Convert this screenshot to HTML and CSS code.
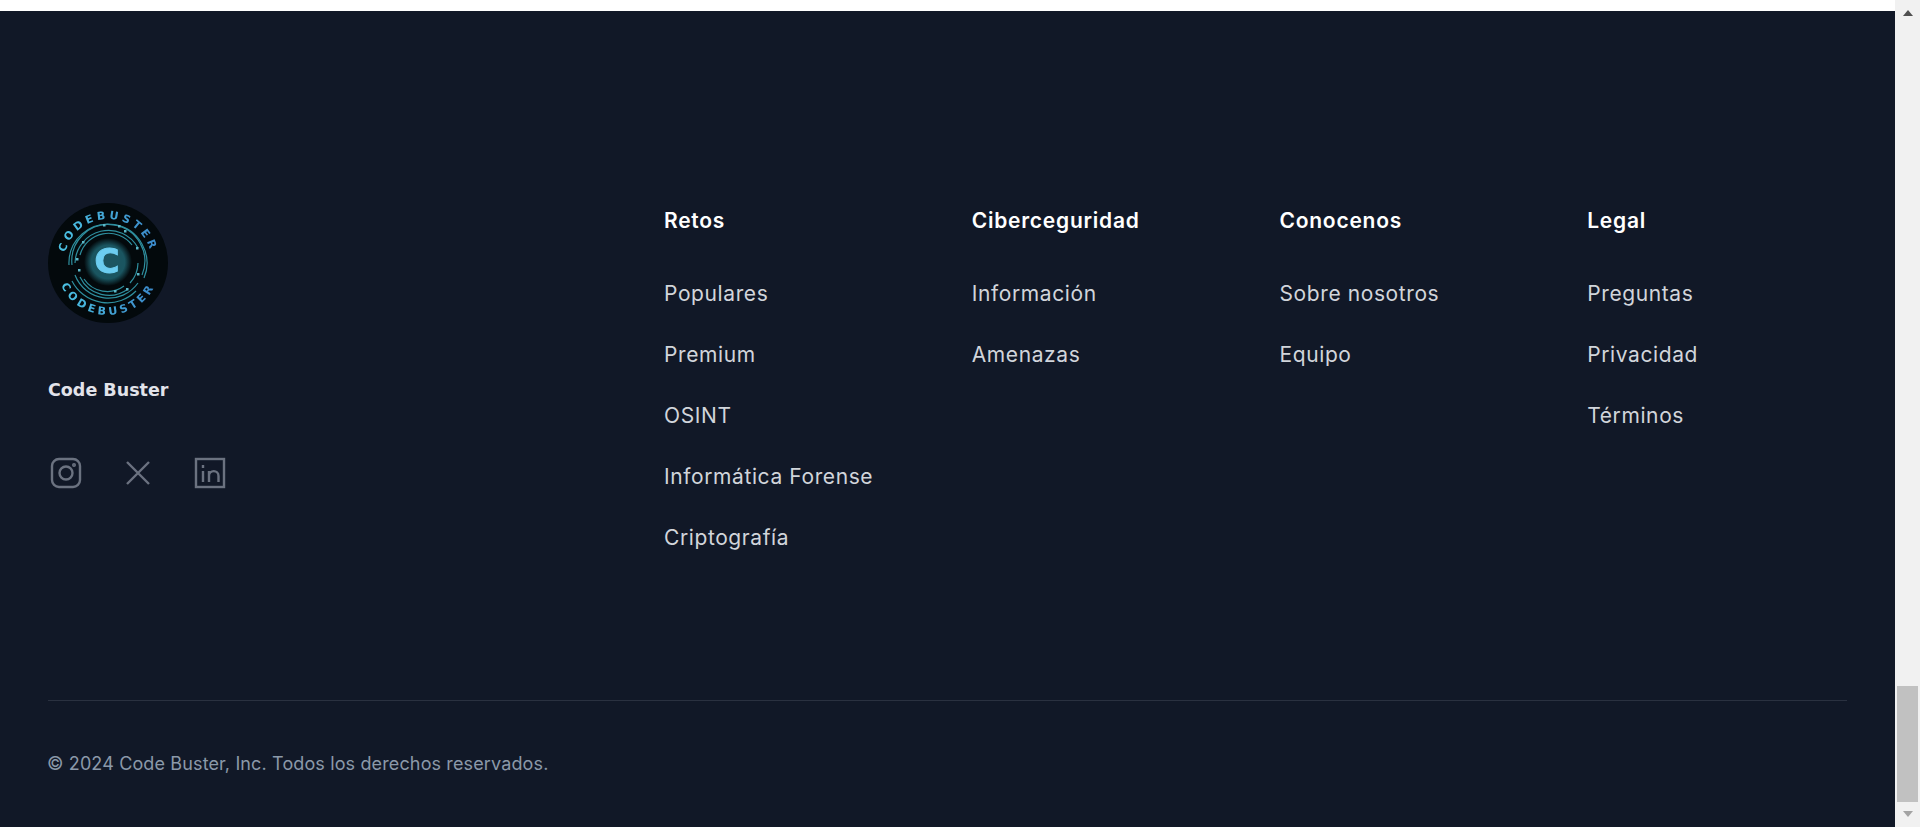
FILE: index.html
```html
<!DOCTYPE html>
<html lang="es">
<head>
<meta charset="utf-8">
<title>Code Buster</title>
<link rel="stylesheet" href="styles.css">
</head>
<body>
<div class="page">
  <main class="main">
    <div class="topstrip"></div>
    <footer class="footer">
      <div class="grid">
        <div class="brand">
          <svg class="logo" viewBox="0 0 120 120" aria-label="CodeBuster logo">
            <defs>
              <path id="arcTop" d="M16 60 A44 44 0 1 1 104 60"/>
              <path id="arcBot" d="M8 60 A52 52 0 0 0 112 60"/>
              <linearGradient id="lg" x1="0" y1="0" x2="1" y2="0">
                <stop offset="0" stop-color="#4cc4e4"/>
                <stop offset="1" stop-color="#3a86c8"/>
              </linearGradient>
              <radialGradient id="glow">
                <stop offset="0" stop-color="#1d5560"/>
                <stop offset="0.7" stop-color="#1a5560"/>
                <stop offset="1" stop-color="#03090c"/>
              </radialGradient>
            </defs>
            <circle cx="60" cy="60" r="60" fill="#03090c"/>
            <text class="logo-ring-text" fill="url(#lg)"><textPath href="#arcTop" startOffset="50%" text-anchor="middle">CODEBUSTER</textPath></text>
            <text class="logo-ring-text" fill="url(#lg)"><textPath href="#arcBot" startOffset="50%" text-anchor="middle">CODEBUSTER</textPath></text>
            <g class="logo-rings">
              <path d="M21 62 A39 39 0 1 1 96 75"/>
              <path d="M24 62 A36.500 36.500 0 1 1 94 72"/>
              <path d="M27 60 A33.500 33.500 0 0 1 90 45"/>
              <path d="M32 52 A29.500 29.500 0 0 1 84 42"/>
              <path d="M90 60 A30 30 0 0 1 82 80"/>
              <path d="M27 72 A36 36 0 0 0 90 80"/>
              <path d="M24 78 A40 40 0 0 0 88 88"/>
              <path d="M32 74 A32 32 0 0 0 80 86"/>
              <path d="M36 76 A28 28 0 0 0 76 83"/>
            </g>
            <g class="logo-dots">
              <rect x="55" y="21" width="2.500" height="2.500"/><rect x="70" y="22" width="2.500" height="2.500"/>
              <rect x="76" y="27" width="2.500" height="2.500"/><rect x="34" y="38" width="2.500" height="2.500"/>
              <rect x="28" y="55" width="2.500" height="2.500"/><rect x="30" y="66" width="2.500" height="2.500"/>
              <rect x="88" y="44" width="2.500" height="2.500"/><rect x="89" y="70" width="2.500" height="2.500"/>
              <rect x="78" y="85" width="2.500" height="2.500"/><rect x="66" y="87" width="2.500" height="2.500"/>
            </g>
            <circle cx="60" cy="59" r="24" fill="url(#glow)"/>
            <text class="logo-c" x="59" y="70" text-anchor="middle">C</text>
          </svg>
          <p class="name">Code Buster</p>
          <div class="social">
            <a class="social-link" href="#" aria-label="Instagram">
              <svg class="icon" viewBox="0 0 36 36"><rect x="4" y="4" width="28" height="28" rx="7"/><circle cx="18" cy="18" r="6.500"/><circle cx="26" cy="10" r="0.800"/></svg>
            </a>
            <a class="social-link" href="#" aria-label="X">
              <svg class="icon" viewBox="0 0 36 36"><path d="M7 7 L29 29 M29 7 L7 29"/></svg>
            </a>
            <a class="social-link" href="#" aria-label="LinkedIn">
              <svg class="icon" viewBox="0 0 36 36"><rect x="4" y="4" width="28" height="28"/><path d="M11 16 V27 M11 10 V13 M17 27 V16 M17 21 C17 14.500 26.500 14.500 26.500 21 V27"/></svg>
            </a>
          </div>
        </div>
        <nav class="col">
          <h3 class="col-title">Retos</h3>
          <ul class="links">
            <li><a href="#">Populares</a></li>
            <li><a href="#">Premium</a></li>
            <li><a href="#">OSINT</a></li>
            <li><a href="#">Informática Forense</a></li>
            <li><a href="#">Criptografía</a></li>
          </ul>
        </nav>
        <nav class="col">
          <h3 class="col-title">Ciberceguridad</h3>
          <ul class="links">
            <li><a href="#">Información</a></li>
            <li><a href="#">Amenazas</a></li>
          </ul>
        </nav>
        <nav class="col">
          <h3 class="col-title">Conocenos</h3>
          <ul class="links">
            <li><a href="#">Sobre nosotros</a></li>
            <li><a href="#">Equipo</a></li>
          </ul>
        </nav>
        <nav class="col">
          <h3 class="col-title">Legal</h3>
          <ul class="links">
            <li><a href="#">Preguntas</a></li>
            <li><a href="#">Privacidad</a></li>
            <li><a href="#">Términos</a></li>
          </ul>
        </nav>
      </div>
      <div class="bottom">
        <p class="copy">© 2024 Code Buster, Inc. Todos los derechos reservados.</p>
      </div>
    </footer>
  </main>
  <aside class="scrollbar" aria-hidden="true">
    <span class="arrow-up"></span>
    <span class="thumb"></span>
    <span class="arrow-down"></span>
  </aside>
</div>
</body>
</html>
```
FILE: styles.css
```css
* { box-sizing: border-box; }
html, body { margin: 0; height: 100%; overflow: hidden; }
body { font-family: Inter, "Open Sans", sans-serif; background: #fff; }
.page { display: flex; height: 827px; }
.main { flex: 1; display: flex; flex-direction: column; min-width: 0; }
.topstrip { height: 11px; background: #fff; flex: none; }
.footer { flex: 1; background: #111827; padding: 192px 48px 0; }
.grid { display: grid; grid-template-columns: 568px repeat(4, 1fr); column-gap: 48px; height: 497px; }
.brand { display: flex; flex-direction: column; align-items: flex-start; }
.logo { width: 120px; height: 120px; display: block; filter: blur(0.35px); }
.logo-ring-text { font-family: "DejaVu Sans", sans-serif; font-weight: 700; font-size: 11px; letter-spacing: 3.4px; }
.logo-rings { fill: none; stroke: #2f8f9f; stroke-width: 1.2; }
.logo-dots { fill: #5cb8c8; }
.logo-c { font-family: "DejaVu Sans", sans-serif; font-weight: 700; font-size: 34px; fill: #6ccdf0; stroke: #6ccdf0; stroke-width: 1; }
.name { margin: 55px 0 0; font-family: "DejaVu Sans", sans-serif; font-weight: 700; font-size: 17.5px; line-height: 24px; color: #e2e3ea; white-space: nowrap; }
.social { display: flex; gap: 36px; margin-top: 53px; }
.social-link { display: block; width: 36px; height: 36px; }
.icon { width: 36px; height: 36px; display: block; fill: none; stroke: #6b7280; stroke-width: 2.4; }
.col-title { margin: 0; padding-top: 4px; font-size: 21px; line-height: 28px; font-weight: 600; letter-spacing: 0.75px; color: #fff; }
.links { list-style: none; margin: 45px 0 0; padding: 0; display: flex; flex-direction: column; gap: 33px; }
.links li { line-height: 28px; font-size: 21px; letter-spacing: 0.6px; }
.links a { color: #d1d5db; text-decoration: none; }
.bottom { border-top: 1px solid #2a3140; padding-top: 49px; }
.copy { margin: 0 0 0 -1px; font-size: 18px; line-height: 28px; letter-spacing: 0.13px; color: #8b99a9; }
.scrollbar { flex: none; width: 25px; background: #f1f1f1; display: flex; flex-direction: column; align-items: center; }
.arrow-up { flex: none; margin-top: 10px; width: 0; height: 0; border-left: 5.5px solid transparent; border-right: 5.5px solid transparent; border-bottom: 6px solid #505050; }
.thumb { flex: none; margin-top: 670px; width: 21px; height: 116px; background: #c1c1c1; }
.arrow-down { flex: none; margin-top: 9px; width: 0; height: 0; border-left: 5.5px solid transparent; border-right: 5.5px solid transparent; border-top: 6px solid #a3a3a3; }
```
